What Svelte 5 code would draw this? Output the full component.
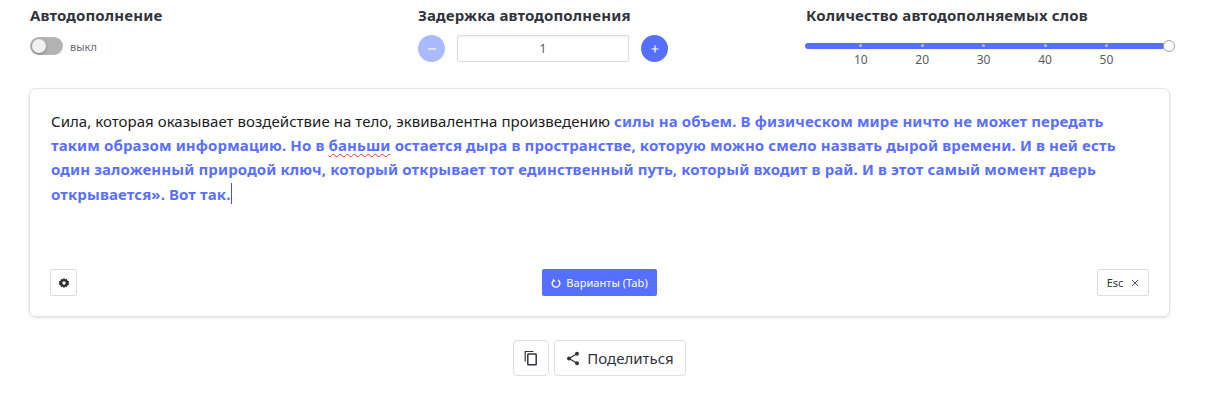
<script>
  const ticks = [10, 20, 30, 40, 50];
</script>

<main class="page">
  <section class="settings">
    <div class="setting">
      <h3>Автодополнение</h3>
      <div class="switch-row">
        <span class="switch"><span class="knob"></span></span>
        <span class="switch-label">выкл</span>
      </div>
    </div>
    <div class="setting">
      <h3>Задержка автодополнения</h3>
      <div class="stepper">
        <button class="round off" aria-label="Меньше">
          <svg width="10" height="10" viewBox="0 0 10 10"><path d="M1 5h8" stroke="#fff" stroke-width="1.1" /></svg>
        </button>
        <div class="num">1</div>
        <button class="round" aria-label="Больше">
          <svg width="10" height="10" viewBox="0 0 10 10"><path d="M1.5 5h7M5 1.5v7" stroke="#fff" stroke-width="1.2" /></svg>
        </button>
      </div>
    </div>
    <div class="setting">
      <h3>Количество автодополняемых слов</h3>
      <div class="slider">
        <div class="rail">
          {#each ticks as t}
            <span class="tick" style="left: {(t / 10) * 61.4 - 5.6}px"><i></i><b>{t}</b></span>
          {/each}
          <span class="handle"></span>
        </div>
      </div>
    </div>
  </section>

  <section class="card">
    <p class="text">Сила, которая оказывает воздействие на тело, эквивалентна произведению <span class="sug">силы на объем. В физическом мире ничто не может передать таким образом информацию. Но в <span class="typo">баньши</span> остается дыра в пространстве, которую можно смело назвать дырой времени. И в ней есть один заложенный природой ключ, который открывает тот единственный путь, который входит в рай. И в этот самый момент дверь открывается». Вот так.</span><span class="caret"></span></p>
    <div class="card-foot">
      <button class="small square" aria-label="Настройки">
        <svg width="12" height="12" viewBox="0 0 12 12">
          <path d="M6 .8l1 1.5 1.8-.2.8 1.6 1.6.9L10.6 6l.6 1.4-1.6.9-.8 1.6L7 9.7l-1 1.5-1-1.5-1.8.2-.8-1.6-1.6-.9L1.4 6 .8 4.6l1.6-.9.8-1.6 1.8.2z" fill="#2f2f37" />
          <circle cx="6" cy="6" r="1.7" fill="#fff" />
        </svg>
      </button>
      <button class="variants">
        <svg width="10" height="10" viewBox="0 0 12 12" fill="none">
          <path d="M3.4 2.6a4.6 4.6 0 1 0 5.2 0" stroke="#fff" stroke-width="1.7" />
          <path d="M2.4 .6v3.6h3.4z" fill="#fff" />
        </svg>
        Варианты (Tab)
      </button>
      <button class="small esc">
        Esc
        <svg width="8" height="8" viewBox="0 0 9 9"><path d="M1 1l7 7M8 1L1 8" stroke="#4a4f5c" stroke-width="1.1" /></svg>
      </button>
    </div>
  </section>

  <section class="actions">
    <button class="action icon-only" aria-label="Копировать">
      <svg width="16" height="16" viewBox="0 0 16 16" fill="none">
        <path d="M10.5 1.5H2.2v10" stroke="#33343c" stroke-width="1.2" />
        <rect x="4.8" y="4" width="8.4" height="10.8" rx=".6" stroke="#33343c" stroke-width="1.5" />
      </svg>
    </button>
    <button class="action share">
      <svg width="14" height="15" viewBox="0 0 14 15">
        <path d="M11 2.8L3 7.5l8 4.7" stroke="#33343c" stroke-width="1.2" fill="none" />
        <circle cx="11" cy="2.8" r="2" fill="#33343c" />
        <circle cx="3" cy="7.5" r="2" fill="#33343c" />
        <circle cx="11" cy="12.2" r="2" fill="#33343c" />
      </svg>
      Поделиться
    </button>
  </section>
</main>

<style>
  :global(body) {
    margin: 0;
    background: #fff;
    font-family: "Noto Sans", "Open Sans", sans-serif;
    color: #33343c;
  }
  .page {
    width: 1141px;
    margin-left: 29px;
    padding-top: 5px;
  }
  button {
    font-family: inherit;
    padding: 0;
    cursor: pointer;
  }
  .settings {
    display: grid;
    grid-template-columns: 388px 388px 1fr;
    height: 83px;
    padding-left: 1px;
  }
  h3 {
    margin: 0;
    font-size: 15px;
    line-height: 20px;
    font-weight: 700;
    letter-spacing: 0.14px;
    color: #33343c;
  }
  .switch-row {
    display: flex;
    align-items: center;
    gap: 7px;
    margin-top: 12px;
  }
  .switch {
    position: relative;
    width: 33px;
    height: 18px;
    border-radius: 9px;
    background: #b3b3b3;
  }
  .knob {
    position: absolute;
    left: 2px;
    top: 2px;
    width: 14px;
    height: 14px;
    border-radius: 50%;
    background: #f1f1f1;
    box-shadow: 0 1px 3px rgba(0, 0, 0, 0.3);
  }
  .switch-label {
    font-size: 11px;
    color: #6b6b72;
  }
  .stepper {
    display: flex;
    align-items: center;
    gap: 12px;
    margin-top: 10px;
  }
  .round {
    width: 27px;
    height: 27px;
    border: none;
    border-radius: 50%;
    background: #5570ff;
    display: flex;
    align-items: center;
    justify-content: center;
  }
  .round.off {
    background: #aabaff;
  }
  .num {
    width: 170px;
    height: 25px;
    border: 1px solid #dcdcdc;
    border-radius: 2px;
    box-shadow: inset 0 1px 2px rgba(0, 0, 0, 0.06);
    display: flex;
    align-items: center;
    justify-content: center;
    font-size: 12px;
    color: #5b5b62;
  }
  .slider {
    margin-top: 18px;
    margin-left: -1px;
    width: 360px;
  }
  .rail {
    position: relative;
    height: 6px;
    border-radius: 3px;
    background: #5570ff;
  }
  .tick {
    position: absolute;
    top: 1px;
    width: 0;
    display: flex;
    flex-direction: column;
    align-items: center;
  }
  .tick i {
    flex: none;
    width: 3px;
    height: 3px;
    border-radius: 50%;
    background: #b9bec9;
  }
  .tick b {
    flex: none;
    font-weight: 400;
    font-size: 12px;
    line-height: 16px;
    margin-top: 5px;
    color: #5b5b62;
  }
  .handle {
    position: absolute;
    right: -10px;
    top: -3px;
    width: 10px;
    height: 10px;
    border: 1px solid #a0a0a6;
    border-radius: 50%;
    background: #fff;
  }
  .card {
    height: 229px;
    box-sizing: border-box;
    border: 1px solid #e4e4e4;
    border-radius: 7px;
    box-shadow: 0 1px 3px rgba(0, 0, 0, 0.12);
    padding: 20px;
    display: flex;
    flex-direction: column;
    justify-content: space-between;
  }
  .text {
    margin: 0;
    padding: 0 24px 0 1px;
    font-size: 15px;
    line-height: 24.2px;
    letter-spacing: 0.04px;
    color: #1c1c22;
  }
  .sug {
    color: #5a6fff;
    font-weight: 700;
    letter-spacing: 0.12px;
  }
  .typo {
    text-decoration: underline wavy #e0352b 1px;
    text-underline-offset: 2px;
  }
  .caret {
    display: inline-block;
    width: 1px;
    height: 21px;
    background: #3c55e0;
    vertical-align: -4px;
  }
  .card-foot {
    display: grid;
    grid-template-columns: 1fr auto 1fr;
    align-items: center;
    height: 27px;
  }
  .small {
    height: 27px;
    border: 1px solid #dedede;
    border-radius: 2px;
    background: #fff;
    display: flex;
    align-items: center;
    justify-content: center;
  }
  .square {
    width: 27px;
  }
  .esc {
    justify-self: end;
    width: 52px;
    gap: 8px;
    font-size: 11px;
    color: #33343c;
  }
  .variants {
    height: 27px;
    width: 115px;
    border: none;
    border-radius: 2px;
    background: #5570ff;
    color: #fff;
    font-size: 11.1px;
    display: flex;
    align-items: center;
    justify-content: center;
    gap: 5px;
  }
  .actions {
    display: flex;
    justify-content: center;
    gap: 5px;
    margin-top: 23px;
  }
  .action {
    height: 36px;
    border: 1px solid #dedede;
    border-radius: 4px;
    background: #fff;
    display: flex;
    align-items: center;
    justify-content: center;
    color: #33343c;
  }
  .icon-only {
    width: 36px;
  }
  .share {
    width: 132px;
    gap: 7px;
    font-size: 15px;
  }
</style>
